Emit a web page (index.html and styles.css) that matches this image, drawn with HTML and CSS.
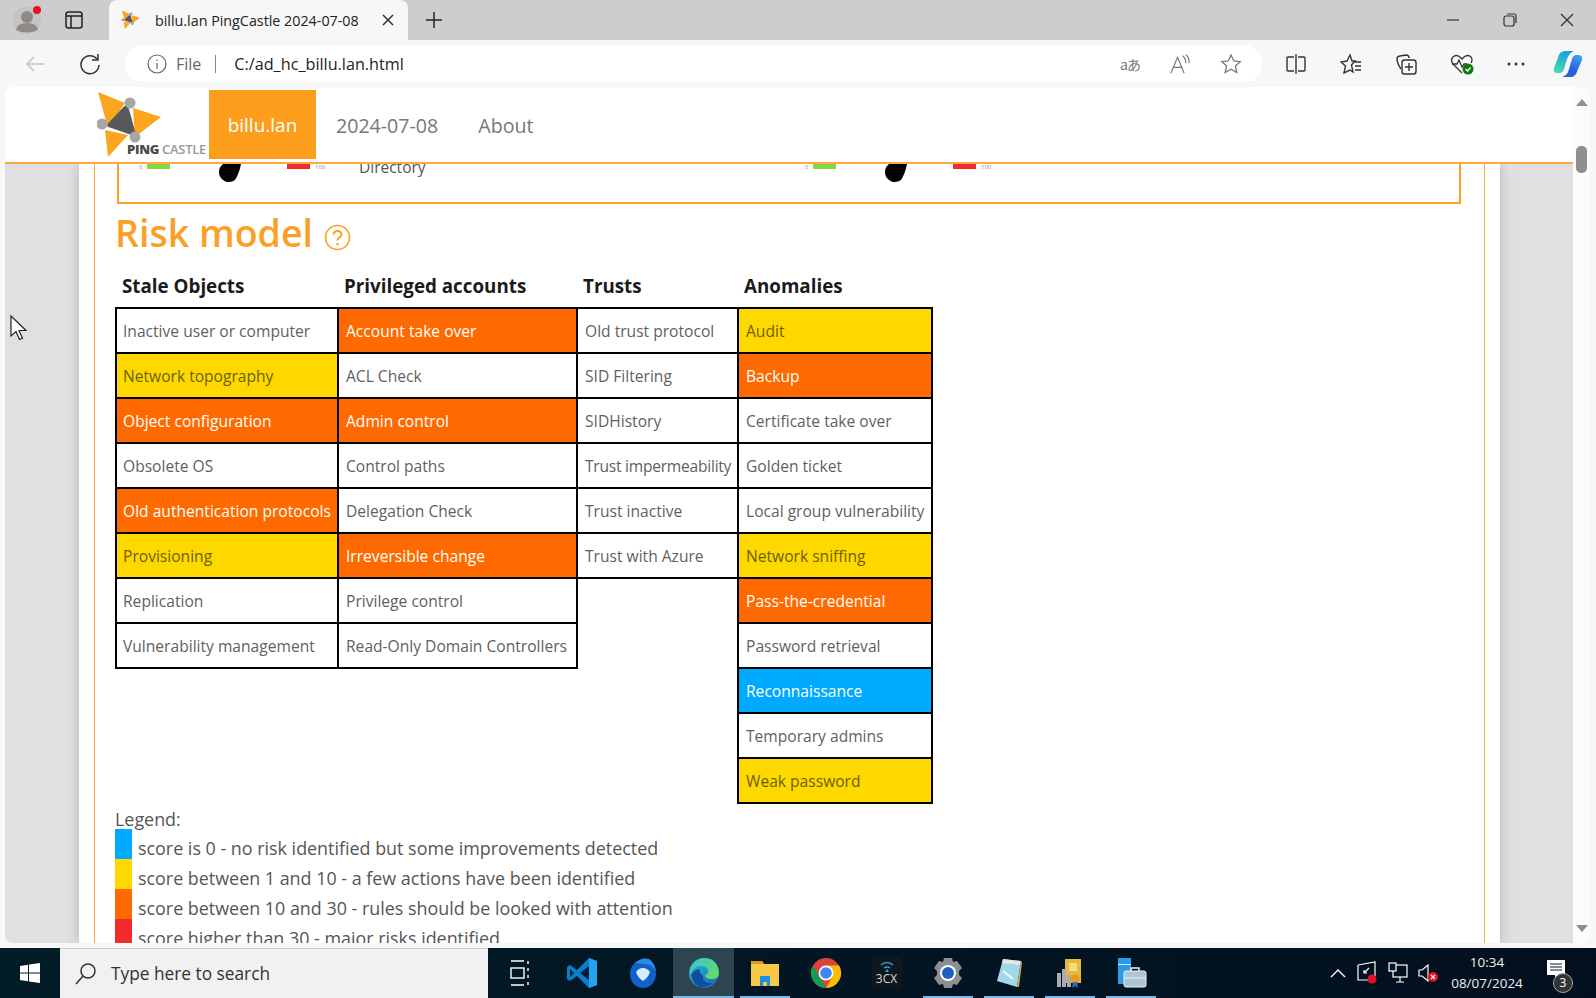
FILE: index.html
```html
<!DOCTYPE html>
<html lang="en">
<head>
    <meta charset="UTF-8">
    <title>billu.lan PingCastle 2024-07-08</title>
    <link rel="stylesheet" href="styles.css">
</head>
<body>
    <svg class="defs" width="0" height="0">
        <symbol id="logo-mark" viewBox="0 0 66 70">
            <path d="M1 2 28 13 11 38Z M36 18 64 27 38 47Z M8 40 31 45 11 67Z" fill="#fba61e"/>
            <path d="M29 18 36 43 13 35Z" fill="#58595b" stroke="#58595b" stroke-width="5" stroke-linejoin="round"/>
            <circle cx="33" cy="13" r="5.500" fill="#a6a6a6"/>
            <circle cx="5" cy="34" r="5.500" fill="#a6a6a6"/>
            <circle cx="38" cy="47" r="5.500" fill="#a6a6a6"/>
        </symbol>
        <symbol id="gauge" viewBox="0 0 200 20">
            <rect x="12" y="0" width="23" height="5" fill="#83d93f"/>
            <path d="M84 8a10 10 0 0 0 16 8q4-6 6-16H88q-4 3-4 8Z" fill="#000"/>
            <rect x="152" y="0" width="23" height="5" fill="#f02a2a"/>
        </symbol>
    </svg>

    <div class="tabstrip">
        <div class="profile">
            <svg width="30" height="30" viewBox="0 0 30 30">
                <circle cx="15" cy="15" r="14" fill="#c4c4c4"/>
                <circle cx="15" cy="12" r="6" fill="#8e8a87"/>
                <path d="M4 25q1-7 11-7t11 7q-11 5-22 0Z" fill="#8e8a87"/>
                <circle cx="25" cy="5" r="4" fill="#e81123"/>
            </svg>
        </div>
        <div class="tab-actions">
            <svg width="18" height="18" viewBox="0 0 18 18" fill="none" stroke="#222" stroke-width="1.5">
                <rect x="1" y="1" width="16" height="16" rx="2.5"/>
                <path d="M1 5h16M6 5v12"/>
            </svg>
        </div>
        <div class="tab">
            <svg class="favicon" width="20" height="20"><use href="#logo-mark"/></svg>
            <span class="tab-title">billu.lan PingCastle 2024-07-08</span>
            <svg class="tab-close" width="12" height="12" viewBox="0 0 12 12" stroke="#333" stroke-width="1.5"><path d="M1 1l10 10M11 1 1 11"/></svg>
        </div>
        <svg class="new-tab" width="18" height="18" viewBox="0 0 18 18" stroke="#222" stroke-width="1.5"><path d="M9 1v16M1 9h16"/></svg>
        <div class="window-controls">
            <svg width="14" height="14" viewBox="0 0 14 14" stroke="#333" stroke-width="1.2"><path d="M1 7h12"/></svg>
            <svg width="14" height="14" viewBox="0 0 14 14" fill="none" stroke="#333" stroke-width="1.2"><rect x="1" y="3" width="10" height="10" rx="2"/><path d="M4 1h7q2 0 2 2v7"/></svg>
            <svg width="14" height="14" viewBox="0 0 14 14" stroke="#333" stroke-width="1.3"><path d="M1 1l12 12M13 1 1 13"/></svg>
        </div>
    </div>

    <div class="toolbar">
        <svg class="nav-back" width="20" height="18" viewBox="0 0 20 18" fill="none" stroke="#c4c4c4" stroke-width="1.5"><path d="M19 9H2M9 2 2 9l7 7"/></svg>
        <svg class="nav-reload" width="22" height="22" viewBox="0 0 22 22" fill="none" stroke="#333" stroke-width="1.5"><path d="M18 6a9 9 0 1 0 2 6"/><path d="M19 1v6h-6"/></svg>
        <div class="addressbar">
            <svg width="20" height="20" viewBox="0 0 20 20" fill="none" stroke="#666" stroke-width="1.2"><circle cx="10" cy="10" r="9"/><path d="M10 9v6M10 5.5v1.5"/></svg>
            <span class="addr-file">File</span>
            <span class="addr-sep"></span>
            <span class="addr-url">C:/ad_hc_billu.lan.html</span>
            <div class="addr-icons">
                <span class="addr-translate">aあ</span>
                <svg width="20" height="20" viewBox="0 0 24 24" fill="none" stroke="#777" stroke-width="1.4"><path d="M1 23 9 4l8 19M4 16h10"/><path d="M15 2q4 3 4 9M19 1q4 3 4 10"/></svg>
                <svg width="22" height="22" viewBox="0 0 22 22" fill="none" stroke="#777" stroke-width="1.3"><path d="M11 2l2.8 6 6.4.7-4.8 4.3 1.4 6.5L11 16.200 5.200 19.500l1.400-6.500L1.800 8.700 8.200 8Z"/></svg>
            </div>
        </div>
        <div class="toolbar-icons">
            <svg width="22" height="22" viewBox="0 0 22 22" fill="none" stroke="#333" stroke-width="1.4"><path d="M9 4H3q-1 0-1 1v12q0 1 1 1h6M13 4h6q1 0 1 1v12q0 1-1 1h-6M11 1v20"/></svg>
            <svg width="22" height="22" viewBox="0 0 22 22" fill="none" stroke="#333" stroke-width="1.4"><path d="M10 2l2 6h3l-3.500 4 1.500 7-3-2-6 3 1.500-7L1 9l6-1Z M15 9h6M15 13h6M15 17h6"/></svg>
            <svg width="22" height="22" viewBox="0 0 22 22" fill="none" stroke="#333" stroke-width="1.4"><path d="M6 16Q2 10 2 6q0-3 3-3l6-1q3 0 3 3"/><rect x="7" y="7" width="14" height="14" rx="2.500"/><path d="M14 10v8M10 14h8"/></svg>
            <svg width="24" height="22" viewBox="0 0 24 22" fill="none" stroke="#333" stroke-width="1.3"><path d="M12 20 3 11Q0 7 3 4t7 0l2 2 2-2q4-3 7 0 2 3 0 6"/><path d="M2 11h5l2-4 3 7 2-3h3"/><circle cx="18" cy="16" r="5.500" fill="#107c10" stroke="none"/><path d="M15.500 16l2 2 3-3.500" stroke="#fff"/></svg>
            <svg width="18" height="4" viewBox="0 0 18 4" fill="#333"><circle cx="2" cy="2" r="1.500"/><circle cx="9" cy="2" r="1.500"/><circle cx="16" cy="2" r="1.500"/></svg>
            <svg class="copilot" width="30" height="28" viewBox="0 0 30 28">
                <defs>
                    <linearGradient id="cp-a" x1="0.600" y1="0" x2="0.200" y2="1"><stop offset="0" stop-color="#1d9be8"/><stop offset="1" stop-color="#45dba4"/></linearGradient>
                    <linearGradient id="cp-b" x1="0.700" y1="0" x2="0.200" y2="1"><stop offset="0" stop-color="#3aa3f2"/><stop offset="0.600" stop-color="#2a5fe0"/><stop offset="1" stop-color="#1a6ad8"/></linearGradient>
                </defs>
                <path d="M9 2Q10 1 12 1H21Q16 3 14 9L11 19Q10 23 6 23H4Q0 23 1 18L6 5Q7 2 9 2Z" fill="url(#cp-a)"/>
                <path d="M9 27H19Q21 27 23 24L29 10Q30 5 25 5H24Q20 5 19 9L16 19Q15 25 9 27Z" fill="url(#cp-b)"/>
            </svg>
        </div>
    </div>

    <div class="webview">
        <div class="page">
            <nav class="navbar">
                <div class="brand">
                    <svg width="66" height="70"><use href="#logo-mark"/></svg>
                    <span class="brand-name"><b>PING</b> CASTLE</span>
                </div>
                <a class="nav-item active">billu.lan</a>
                <a class="nav-item">2024-07-08</a>
                <a class="nav-item">About</a>
            </nav>
            <div class="page-body">
                <div class="container">
                    <div class="report">
                        <div class="indicators">
                            <div class="gauge-wrap">
                                <span class="gauge-num">0</span>
                                <span class="gauge-num max">100</span>
                                <svg class="gauge" width="200" height="20"><use href="#gauge"/></svg>
                            </div>
                            <span class="indicator-label">Directory</span>
                            <div class="gauge-wrap">
                                <span class="gauge-num">0</span>
                                <span class="gauge-num max">100</span>
                                <svg class="gauge" width="200" height="20"><use href="#gauge"/></svg>
                            </div>
                        </div>
                        <h1 class="section-title">Risk model
                            <svg class="help" width="27" height="27" viewBox="0 0 27 27" fill="none" stroke="#fb9f28" stroke-width="1.6"><circle cx="13.500" cy="13.500" r="12"/><path d="M9.500 10.500q.5-3.500 4-3.500t4 3.200q0 2-2 3.200t-2 3.100" stroke-width="2"/><path d="M13.500 19v2.200" stroke-width="2.200"/></svg>
                        </h1>
                        <table class="model">
                            <thead>
                                <tr><th>Stale Objects</th><th>Privileged accounts</th><th>Trusts</th><th>Anomalies</th></tr>
                            </thead>
                            <tbody>
                                <tr><td>Inactive user or computer</td><td class="high">Account take over</td><td>Old trust protocol</td><td class="low">Audit</td></tr>
                                <tr><td class="low">Network topography</td><td>ACL Check</td><td>SID Filtering</td><td class="high">Backup</td></tr>
                                <tr><td class="high">Object configuration</td><td class="high">Admin control</td><td>SIDHistory</td><td>Certificate take over</td></tr>
                                <tr><td>Obsolete OS</td><td>Control paths</td><td class="tight">Trust impermeability</td><td>Golden ticket</td></tr>
                                <tr><td class="high">Old authentication protocols</td><td>Delegation Check</td><td>Trust inactive</td><td>Local group vulnerability</td></tr>
                                <tr><td class="low">Provisioning</td><td class="high">Irreversible change</td><td>Trust with Azure</td><td class="low">Network sniffing</td></tr>
                                <tr><td>Replication</td><td>Privilege control</td><td class="none"></td><td class="high">Pass-the-credential</td></tr>
                                <tr><td>Vulnerability management</td><td>Read-Only Domain Controllers</td><td class="none"></td><td>Password retrieval</td></tr>
                                <tr><td class="none"></td><td class="none"></td><td class="none"></td><td class="info">Reconnaissance</td></tr>
                                <tr><td class="none"></td><td class="none"></td><td class="none"></td><td>Temporary admins</td></tr>
                                <tr><td class="none"></td><td class="none"></td><td class="none"></td><td class="low">Weak password</td></tr>
                            </tbody>
                        </table>
                        <div class="legend">
                            <div class="legend-title">Legend:</div>
                            <div class="legend-row"><span class="swatch info"></span><span class="legend-text">score is 0 - no risk identified but some improvements detected</span></div>
                            <div class="legend-row"><span class="swatch low"></span><span class="legend-text">score between 1 and 10 - a few actions have been identified</span></div>
                            <div class="legend-row"><span class="swatch high"></span><span class="legend-text">score between 10 and 30 - rules should be looked with attention</span></div>
                            <div class="legend-row"><span class="swatch critical"></span><span class="legend-text">score higher than 30 - major risks identified</span></div>
                        </div>
                    </div>
                </div>
            </div>
        </div>
        <div class="scrollbar">
            <span class="arrow-up"></span>
            <span class="thumb"></span>
            <span class="arrow-down"></span>
        </div>
        <svg class="cursor" width="18" height="26" viewBox="0 0 18 26"><path d="M1 1v20l5-4.500 3.500 8 3-1.300-3.500-7.700h7Z" fill="#fff" stroke="#222" stroke-width="1.2"/></svg>
    </div>

    <div class="taskbar">
        <div class="start">
            <svg width="20" height="20" viewBox="0 0 20 20" fill="#fff"><path d="M0 3l8-1.200V9.500H0ZM9 1.600 20 0v9.500H9ZM0 10.500h8v7.700L0 17ZM9 10.500h11V20L9 18.400Z"/></svg>
        </div>
        <div class="search">
            <svg width="24" height="24" viewBox="0 0 24 24" fill="none" stroke="#333" stroke-width="1.5"><circle cx="14" cy="9" r="7"/><path d="M9 14 2 22"/></svg>
            <span>Type here to search</span>
        </div>
        <div class="task-item task-view">
            <svg width="20" height="26" viewBox="0 0 20 26" fill="none" stroke="#fff" stroke-width="1.400"><path d="M1 1h13M1 25h13"/><rect x="1" y="8" width="13" height="10"/><path d="M18 1v3M18 8v3M18 15v3M18 22v3"/></svg>
        </div>
        <div class="task-item">
            <svg width="32" height="32" viewBox="0 0 32 32"><path d="M23 1 11 13 4 8 1 10v12l3 2 7-5 12 12 8-3V4Z" fill="#0a7fcc"/><path d="M23 9 14 16l9 7Z" fill="#02203a"/><path d="M4 12v8l4-4Z" fill="#02203a"/><path d="M23 1l8 3v24l-8 3Z" fill="#22a4ee"/></svg>
        </div>
        <div class="task-item">
            <svg width="32" height="32" viewBox="0 0 32 32"><ellipse cx="16" cy="17" rx="13" ry="14" fill="#1261c9"/><path d="M8 6q6-6 14-4 6 4 7 12-5-8-13-7Z" fill="#2a8be8"/><path d="M9 15q3-4 7-4t7 4q-2 6-7 9-5-3-7-9Z" fill="#d8ebf9"/></svg>
        </div>
        <div class="task-item current">
            <svg width="32" height="32" viewBox="0 0 32 32">
                <defs>
                    <linearGradient id="edge-a" x1="0" y1="0" x2="1" y2="1"><stop offset="0" stop-color="#2cc3e0"/><stop offset="1" stop-color="#1560b8"/></linearGradient>
                    <linearGradient id="edge-b" x1="0" y1="0" x2="1" y2="1"><stop offset="0" stop-color="#36c6d8"/><stop offset="1" stop-color="#6ddc52"/></linearGradient>
                </defs>
                <circle cx="16" cy="16" r="15" fill="url(#edge-a)"/>
                <path d="M3 10Q8 1 17 1q13 1 14 15 0 6-8 6-6 0-6-4 4-1 3-5-3-5-9-4t-8 8Q1 14 3 10Z" fill="url(#edge-b)"/>
                <path d="M15 19q0 8 9 7-5 5-12 4-7-3-9-12 3-6 9-6-2 3 3 7Z" fill="#0f4fa0"/>
            </svg>
        </div>
        <div class="task-item running">
            <svg width="30" height="30" viewBox="0 0 30 30"><path d="M1 3h11l2 3h15v22H1Z" fill="#f7c948"/><path d="M1 3h11l2 3H1Z" fill="#d99a1e"/><path d="M10 18h10v10H10Z" fill="#1f8fe0"/><path d="M13 24h4v4h-4Z" fill="#f7c948"/></svg>
        </div>
        <div class="task-item">
            <svg width="32" height="32" viewBox="0 0 32 32"><circle cx="16" cy="16" r="15" fill="#db4437"/><path d="M29 8.500A15 15 0 0 1 16 31l6.500-11.500L16 8.500Z" fill="#fbbc04"/><path d="M3 8.500 9.500 20 16 31A15 15 0 0 1 3 8.500Z" fill="#0f9d58"/><circle cx="16" cy="16" r="7.500" fill="#fff"/><circle cx="16" cy="16" r="5.800" fill="#4285f4"/></svg>
        </div>
        <div class="task-item">
            <div class="app-3cx">
                <svg width="14" height="10" viewBox="0 0 14 10" fill="none" stroke="#2a9fd6" stroke-width="1.500"><path d="M1 3q6-5 12 0M4 6q3-2 6 0"/><circle cx="7" cy="9" r=".8"/></svg>
                <span>3CX</span>
            </div>
        </div>
        <div class="task-item running">
            <svg width="30" height="32" viewBox="0 0 30 32"><path d="M11 1h8l1 4 4-1 5 7-3 3v4l3 3-5 7-4-1-1 4h-8l-1-4-4 1-5-7 3-3v-4L1 11l5-7 4 1Z" fill="#8b8f94"/><circle cx="15" cy="16" r="8" fill="#fff"/><circle cx="15" cy="16" r="6" fill="#1f5fbf"/></svg>
        </div>
        <div class="task-item running">
            <svg width="28" height="32" viewBox="0 0 28 32"><path d="M8 2 26 4 22 30 2 24Z" fill="#9fd9e8"/><path d="M8 2 26 4 25 8 7 6Z" fill="#e6e6e6"/><path d="M22 30 26 4l1 2-3 24Z" fill="#c9a650"/><path d="M8 14l10 8" stroke="#e8fbff" stroke-width="2"/></svg>
        </div>
        <div class="task-item running">
            <svg width="30" height="32" viewBox="0 0 30 32"><path d="M10 2h16v24H10Z" fill="#e2b93b"/><path d="M14 6h8v8h-8Z" fill="#f4dc86"/><path d="M2 16h4v14H2ZM7 12h4v18H7ZM12 18h4v12h-4Z" fill="#a8acb0"/><circle cx="20" cy="22" r="4.500" fill="#e89a1c"/><path d="M18 25l-1 6 3-2 3 2-1-6Z" fill="#2f6fc4"/></svg>
        </div>
        <div class="task-item running">
            <svg width="32" height="32" viewBox="0 0 32 32"><path d="M3 1h13v26H3Z" fill="#2a9be8"/><path d="M3 7h13v1H3Z" fill="#d6eefb"/><rect x="9" y="14" width="22" height="16" rx="2" fill="#a9c5d6" stroke="#eaf3f8"/><path d="M16 14v-3h8v3" fill="none" stroke="#eaf3f8" stroke-width="1.500"/><path d="M9 21h22" stroke="#eaf3f8"/></svg>
        </div>
        <div class="tray">
            <svg width="16" height="10" viewBox="0 0 16 10" fill="none" stroke="#fff" stroke-width="1.400"><path d="M1 9l7-7 7 7"/></svg>
            <svg width="22" height="24" viewBox="0 0 22 24" fill="none" stroke="#fff" stroke-width="1.200"><path d="M2 4 19 1v14"/><path d="M2 4v15h10"/><path d="M8 12l5-5M8 9v3h3"/><circle cx="16" cy="18" r="4.500" fill="#e81123" stroke="none"/></svg>
            <svg width="20" height="22" viewBox="0 0 20 22" fill="none" stroke="#fff" stroke-width="1.200"><rect x="5" y="3" width="14" height="12"/><rect x="1" y="1" width="7" height="8" fill="#021824"/><path d="M12 15v5M8 20h8"/></svg>
            <svg width="22" height="22" viewBox="0 0 22 22" fill="none" stroke="#fff" stroke-width="1.200"><path d="M1 8v6h3l6 5V3L4 8Z"/><circle cx="15" cy="15" r="5" fill="#e81123" stroke="none"/><path d="M13 13l4 4M17 13l-4 4"/></svg>
        </div>
        <div class="clock">
            <span>10:34</span>
            <span>08/07/2024</span>
        </div>
        <div class="notify">
            <svg width="20" height="24" viewBox="0 0 20 24" fill="#fff"><path d="M1 1h18v15h-6l-4 5v-5H1Z"/><path d="M4 5h12M4 8h12M4 11h12" stroke="#021824"/></svg>
            <span class="notify-badge">3</span>
        </div>
    </div>
</body>
</html>
```

FILE: styles.css
```css
* {
    box-sizing: border-box;
}
html, body {
    margin: 0;
    height: 998px;
    overflow: hidden;
}
body {
    display: flex;
    flex-direction: column;
    background-color: #f7f7f7;
    font-family: "Open Sans", "Noto Sans", sans-serif;
    color: #555;
}
.defs {
    position: absolute;
}

/* browser chrome */
.tabstrip {
    display: flex;
    align-items: center;
    height: 40px;
    flex: none;
    background-color: #cdcdcd;
}
.profile {
    display: flex;
    margin-left: 12px;
}
.tab-actions {
    display: flex;
    margin-left: 23px;
}
.tab {
    display: flex;
    align-items: center;
    align-self: flex-end;
    width: 299px;
    height: 40px;
    margin-left: 26px;
    padding-left: 12px;
    background-color: #f7f7f7;
    border-radius: 8px 8px 0 0;
}
.tab-title {
    margin-left: 14px;
    font-size: 14.3px;
    color: #222;
    white-space: nowrap;
}
.tab-close {
    margin-left: auto;
    margin-right: 14px;
}
.new-tab {
    margin-left: 17px;
}
.window-controls {
    display: flex;
    gap: 43px;
    margin-left: auto;
    margin-right: 22px;
}
.toolbar {
    display: flex;
    align-items: center;
    height: 47px;
    flex: none;
}
.nav-back {
    margin-left: 25px;
}
.nav-reload {
    margin-left: 34px;
}
.addressbar {
    display: flex;
    align-items: center;
    width: 1137px;
    height: 37px;
    margin-left: 24px;
    padding-left: 22px;
    background-color: #fff;
    border-radius: 18px;
}
.addr-file {
    margin-left: 9px;
    font-size: 16px;
    color: #666;
}
.addr-sep {
    width: 1px;
    height: 18px;
    margin-left: 14px;
    background-color: #888;
}
.addr-url {
    margin-left: 18px;
    font-size: 16.2px;
    color: #222;
}
.addr-icons {
    display: flex;
    align-items: center;
    gap: 30px;
    margin-left: auto;
    margin-right: 20px;
}
.addr-translate {
    font-family: "Noto Sans CJK JP", "Noto Sans", sans-serif;
    font-size: 14px;
    letter-spacing: -1px;
    color: #777;
}
.toolbar-icons {
    display: flex;
    align-items: center;
    gap: 33px;
    margin-left: 23px;
}
.copilot {
    margin-left: -5px;
}
.webview {
    position: relative;
    display: flex;
    flex: none;
    width: 1585px;
    height: 856px;
    margin-left: 5px;
    margin-bottom: 5px;
    background-color: #fff;
    border-radius: 8px;
    overflow: hidden;
}
.page {
    display: flex;
    flex-direction: column;
    width: 1568px;
}
.scrollbar {
    position: relative;
    display: flex;
    flex-direction: column;
    align-items: center;
    width: 17px;
    padding-top: 12px;
    background-color: #fbfbfb;
}
.arrow-up {
    width: 0;
    border: 6px solid transparent;
    border-top: 0;
    border-bottom: 7px solid #8e8e8e;
}
.thumb {
    width: 11px;
    height: 27px;
    margin-top: 40px;
    background-color: #8e8e8e;
    border-radius: 5px;
}
.arrow-down {
    width: 0;
    margin-top: auto;
    margin-bottom: 11px;
    border: 6px solid transparent;
    border-bottom: 0;
    border-top: 7px solid #8e8e8e;
}
.cursor {
    position: absolute;
    left: 5px;
    top: 228px;
}

/* report nav */
.navbar {
    display: flex;
    flex: none;
    height: 77px;
    padding-top: 3px;
    padding-left: 92px;
    background-color: #fff;
    border-bottom: 2px solid #ffa940;
}
.brand {
    position: relative;
    width: 109px;
    margin-right: 3px;
}
.brand-name {
    position: absolute;
    left: 30px;
    top: 50px;
    font-size: 13px;
    line-height: 18px;
    color: #999;
    font-weight: 600;
    letter-spacing: -0.3px;
    white-space: nowrap;
}
.brand-name b {
    color: #4a4a4a;
}
.nav-item {
    display: flex;
    align-items: center;
    height: 69px;
    padding: 1px 20px 0;
    font-size: 19.6px;
    color: #777;
}
.nav-item.active {
    width: 107px;
    justify-content: center;
    padding: 1px 0 0;
    background-color: #fd9d1c;
    font-size: 19px;
    color: #fff;
}
.page-body {
    flex: 1;
    min-height: 0;
    padding-left: 74px;
    background-color: #e0e0e0;
    overflow: hidden;
}
.container {
    width: 1421px;
    height: 100%;
    padding: 0 15px;
    background-color: #fff;
    box-shadow: 0 0 12px rgba(0, 0, 0, 0.2);
}
.report {
    height: 100%;
    padding: 0 20px;
    border-left: 1px solid #ffa940;
    border-right: 1px solid #ffa940;
}

/* top of the report, scrolled under the nav */
.indicators {
    display: flex;
    align-items: flex-start;
    width: 1344px;
    height: 40px;
    margin-left: 2px;
    padding-left: 16px;
    border: 2px solid #fb9f28;
    border-top: 0;
}
.gauge-wrap {
    position: relative;
    flex: none;
    width: 200px;
    height: 20px;
}
.gauge {
    display: block;
}
.gauge-num {
    position: absolute;
    left: 4px;
    top: 0;
    font-size: 6px;
    line-height: 6px;
    color: #888;
}
.gauge-num.max {
    left: 180px;
}
.indicator-label {
    width: 466px;
    margin-top: -5px;
    padding-left: 24px;
    font-size: 15.5px;
    line-height: 16px;
}
.section-title {
    display: flex;
    align-items: center;
    gap: 11px;
    height: 55px;
    margin: 0;
    padding-top: 2px;
    font-size: 37.5px;
    font-weight: 600;
    color: #fb9f28;
}
.help {
    margin-top: 10px;
}

/* risk model */
.model {
    margin-top: 5px;
    border-collapse: collapse;
    table-layout: fixed;
    width: 816px;
}
.model th {
    height: 44px;
    padding: 0 6px;
    text-align: left;
    font-size: 18.8px;
    font-weight: 700;
    color: #1b1b1b;
}
.model th:nth-child(1) { width: 222px; }
.model th:nth-child(2) { width: 239px; }
.model th:nth-child(3) { width: 161px; }
.model th:nth-child(4) { width: 194px; }
.model td {
    height: 45px;
    padding: 0 6px 0 7px;
    border: 2px solid #000;
    font-size: 15.6px;
    white-space: nowrap;
    color: #5f5f5f;
}
.model td:first-child {
    padding-left: 6px;
}
.model td.none {
    border: 0;
}
.model td.tight {
    letter-spacing: -0.25px;
}
.model td.low {
    background-color: #ffd800;
    color: #6a6000;
}
.model td.high {
    background-color: #ff6a00;
    color: #fff;
}
.model td.info {
    background-color: #00aaff;
    color: #fff;
}
.legend {
    margin-top: 6px;
    font-size: 17.9px;
    color: #555;
}
.legend-title {
    height: 19px;
    line-height: 19px;
}
.legend-row {
    display: flex;
    align-items: center;
    gap: 6px;
    height: 30px;
    white-space: nowrap;
}
.legend-text {
    margin-top: 7px;
}
.swatch {
    width: 17px;
    height: 30px;
}
.swatch.info { background-color: #00aaff; }
.swatch.low { background-color: #ffd800; }
.swatch.high { background-color: #ff6a00; }
.swatch.critical { background-color: #f12b2b; }

/* windows taskbar */
.taskbar {
    display: flex;
    align-items: stretch;
    flex: none;
    height: 50px;
    padding-right: 14px;
    background: linear-gradient(90deg, #021c28, #020f1f);
}
.start {
    display: flex;
    align-items: center;
    justify-content: center;
    width: 60px;
}
.search {
    display: flex;
    align-items: center;
    gap: 13px;
    width: 428px;
    padding-left: 14px;
    background-color: #f1f1f1;
    border-top: 1px solid #ccc;
    font-size: 17.3px;
    color: #333;
}
.task-item {
    display: flex;
    align-items: center;
    justify-content: center;
    width: 61px;
    padding: 0 5px;
}
.task-view {
    width: 63px;
}
.task-item.current {
    background-color: #2e4550;
    box-shadow: inset 0 -2px 0 #76b9ed;
}
.task-item.running {
    background: linear-gradient(#76b9ed, #76b9ed) no-repeat center bottom / 50px 2px;
}
.app-3cx {
    display: flex;
    flex-direction: column;
    align-items: center;
    justify-content: center;
    width: 30px;
    height: 32px;
    background-color: #10181c;
    border-radius: 4px;
    font-size: 12px;
    line-height: 13px;
    color: #d0d8dc;
}
.tray {
    display: flex;
    align-items: center;
    gap: 10px;
    margin-left: auto;
    color: #fff;
}
.clock {
    display: flex;
    flex-direction: column;
    align-items: center;
    justify-content: center;
    gap: 4px;
    width: 96px;
    margin-left: -1px;
    font-size: 13.500px;
    line-height: 17px;
    color: #eee;
}
.notify {
    position: relative;
    display: flex;
    align-items: center;
    justify-content: center;
    width: 47px;
    padding-bottom: 4px;
    padding-right: 6px;
}
.notify-badge {
    position: absolute;
    left: 18px;
    top: 25px;
    width: 20px;
    height: 20px;
    background-color: #333;
    border: 1px solid #aaa;
    border-radius: 50%;
    text-align: center;
    font-size: 12px;
    line-height: 18px;
    color: #fff;
}
```
